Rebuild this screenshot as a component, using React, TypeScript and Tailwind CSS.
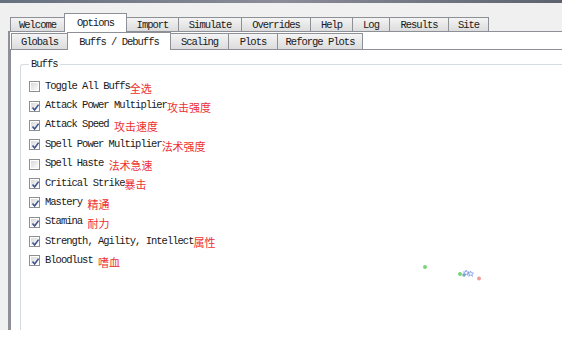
import React from 'react'

const mono = { fontFamily: '"Liberation Mono", "Noto Sans CJK SC", monospace' }

const outerTabs = [
  { label: 'Welcome', w: 'w-[55px]' },
  { label: 'Options', w: 'w-[63px]', active: true },
  { label: 'Import', w: 'w-[53px]' },
  { label: 'Simulate', w: 'w-[64px]' },
  { label: 'Overrides', w: 'w-[70px]' },
  { label: 'Help', w: 'w-[43px]' },
  { label: 'Log', w: 'w-[38px]' },
  { label: 'Results', w: 'w-[60px]' },
  { label: 'Site', w: 'w-[41px]' },
]

const innerTabs = [
  { label: 'Globals', w: 'w-[57px]' },
  { label: 'Buffs / Debuffs', w: 'w-[104px]', active: true },
  { label: 'Scaling', w: 'w-[59px]' },
  { label: 'Plots', w: 'w-[50px]' },
  { label: 'Reforge Plots', w: 'w-[86px]' },
]

const buffs = [
  { en: 'Toggle All Buffs', zh: '全选', checked: false },
  { en: 'Attack Power Multiplier', zh: '攻击强度', checked: true },
  { en: 'Attack Speed ', zh: '攻击速度', checked: true },
  { en: 'Spell Power Multiplier', zh: '法术强度', checked: true },
  { en: 'Spell Haste ', zh: '法术急速', checked: false },
  { en: 'Critical Strike', zh: '暴击', checked: true },
  { en: 'Mastery ', zh: '精通', checked: true },
  { en: 'Stamina ', zh: '耐力', checked: true },
  { en: 'Strength, Agility, Intellect', zh: '属性', checked: true },
  { en: 'Bloodlust ', zh: '嗜血', checked: true },
]

function Tab({ label, w, active, tall, short }: { label: string; w: string; active?: boolean; tall: string; short: string }) {
  return (
    <div
      className={`${w} -ml-px first:ml-0 flex items-center justify-center pt-[2px] border border-b-0 border-[#8d9096] text-[10.5px] tracking-[-1px] text-[#1a1a1a] whitespace-pre ${
        active ? `${tall} relative z-10 -mb-px bg-white` : `${short} bg-gradient-to-b from-[#f4f4f4] to-[#dcdcdc]`
      }`}
    >
      {label}
    </div>
  )
}

function Checkbox({ checked }: { checked: boolean }) {
  return (
    <div className="w-[11px] h-[11px] border border-[#8e8f91] bg-white p-px shrink-0">
      <div className="w-full h-full bg-gradient-to-br from-[#dadada] to-[#fbfbfb] relative">
        {checked && (
          <svg viewBox="0 0 9 9" className="absolute inset-0 w-[9px] h-[9px]">
            <path d="M1.5 4.6 L3.6 7 L7.6 1.6" fill="none" stroke="#3b4f8a" strokeWidth="1.5" />
          </svg>
        )}
      </div>
    </div>
  )
}

export default function App() {
  return (
    <div className="w-[568px] h-[343px] bg-white relative overflow-hidden" style={mono}>
      <div className="w-[562px] h-[330px] bg-[#f0f0f0] flex flex-col overflow-hidden">
        <div className="h-[3px] bg-gradient-to-r from-[#66707e] via-[#8b8d99] to-[#5c636e]" />
        <div className="h-[10px]" />
        {/* outer tabs */}
        <div className="h-[18px] flex items-end pl-[10px]">
          {outerTabs.map((t) => (
            <Tab key={t.label} {...t} tall="h-[19px]" short="h-[14px]" />
          ))}
        </div>
        {/* outer panel */}
        <div className="flex-1 ml-[8px] border-l-2 border-t border-[#8d9096] bg-white flex flex-col">
          <div className="h-[17px] flex items-end pl-[1px]">
            {innerTabs.map((t) => (
              <Tab key={t.label} {...t} tall="h-[18px]" short="h-[16px]" />
            ))}
          </div>
          <div className="flex-1 border-l border-t border-[#8d9096] flex flex-col">
            <div className="flex-1 ml-[9px] mt-[14px] border-l border-t border-[#d5dde3] rounded-tl-[3px] relative pl-[8px] pt-[12px]">
              <span className="absolute -top-[7px] left-[8px] bg-white px-[2px] text-[10.5px] tracking-[-1px] leading-[12px] text-[#1a1a1a]">
                Buffs
              </span>
              {buffs.map((b) => (
                <div key={b.en} className="h-[19.35px] flex items-center">
                  <Checkbox checked={b.checked} />
                  <span className="ml-[5px] text-[10.5px] tracking-[-1px] text-[#1a1a1a] whitespace-pre">{b.en}</span>
                  <span
                    className="text-[11px] text-[#ee2f2f] leading-none mt-[3px]"
                    style={{ fontFamily: '"Noto Sans CJK SC", sans-serif' }}
                  >
                    {b.zh}
                  </span>
                </div>
              ))}
            </div>
          </div>
        </div>
      </div>
      {/* stray plot marks */}
      <svg className="absolute left-[420px] top-[262px]" width="66" height="22" viewBox="0 0 66 22">
        <circle cx="5" cy="5" r="2" fill="#7ad27a" />
        <circle cx="40" cy="12" r="2" fill="#7ad27a" />
        <circle cx="44" cy="13" r="1.8" fill="#6fb4a6" />
        <path d="M46 8 l1 2 2 0 -1.6 1.3 .7 2 -1.9 -1.2 -1.9 1.2 .7 -2 -1.6 -1.3 2 0z" fill="none" stroke="#7d98e6" strokeWidth="0.8" />
        <path d="M50.5 9 l1 2 2 0 -1.6 1.3 .7 2 -1.9 -1.2 -1.9 1.2 .7 -2 -1.6 -1.3 2 0z" fill="none" stroke="#7d98e6" strokeWidth="0.8" />
        <circle cx="59" cy="16.5" r="2" fill="#f29a9a" />
      </svg>
    </div>
  )
}
